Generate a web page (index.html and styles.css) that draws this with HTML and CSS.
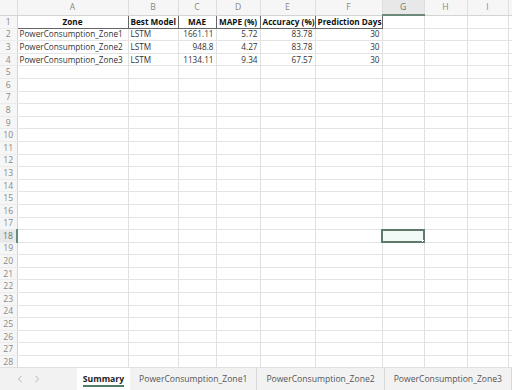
FILE: index.html
```html
<!DOCTYPE html>
<html>
<head>
    <meta charset="UTF-8">
    <title>Summary</title>
    <link rel="stylesheet" href="styles.css">
</head>
<body>
    <div class="sheet">
        <table class="grid">
            <colgroup>
                <col class="c-hdr"><col class="c-a"><col class="c-b"><col class="c-c"><col class="c-d">
                <col class="c-e"><col class="c-f"><col class="c-g"><col class="c-h"><col class="c-i"><col>
            </colgroup>
            <thead>
                <tr>
                    <th class="corner"></th>
                    <th>A</th><th>B</th><th>C</th><th>D</th><th>E</th><th>F</th>
                    <th class="sel-col">G</th><th>H</th><th>I</th><th></th>
                </tr>
            </thead>
            <tbody id="rows">
                <tr>
                    <th>1</th>
                    <td class="head">Zone</td><td class="head">Best Model</td><td class="head">MAE</td>
                    <td class="head">MAPE (%)</td><td class="head">Accuracy (%)</td><td class="head">Prediction Days</td>
                    <td></td><td></td><td></td><td></td>
                </tr>
                <tr>
                    <th>2</th>
                    <td>PowerConsumption_Zone1</td><td>LSTM</td><td class="num">1661.11</td>
                    <td class="num">5.72</td><td class="num">83.78</td><td class="num">30</td>
                    <td></td><td></td><td></td><td></td>
                </tr>
                <tr>
                    <th>3</th>
                    <td>PowerConsumption_Zone2</td><td>LSTM</td><td class="num">948.8</td>
                    <td class="num">4.27</td><td class="num">83.78</td><td class="num">30</td>
                    <td></td><td></td><td></td><td></td>
                </tr>
                <tr>
                    <th>4</th>
                    <td>PowerConsumption_Zone3</td><td>LSTM</td><td class="num">1134.11</td>
                    <td class="num">9.34</td><td class="num">67.57</td><td class="num">30</td>
                    <td></td><td></td><td></td><td></td>
                </tr>
            </tbody>
        </table>
    </div>

    <div class="tabbar">
        <span class="nav first">
            <svg width="6" height="8" viewBox="0 0 6 8"><path d="M4.5 0.8 L1.5 4 L4.5 7.2" fill="none" stroke="#b4b4b4" stroke-width="1"/></svg>
        </span>
        <span class="nav">
            <svg width="6" height="8" viewBox="0 0 6 8"><path d="M1.5 0.8 L4.5 4 L1.5 7.2" fill="none" stroke="#b4b4b4" stroke-width="1"/></svg>
        </span>
        <span class="tab active"><span class="label">Summary</span></span>
        <span class="tab">PowerConsumption_Zone1</span>
        <span class="tab">PowerConsumption_Zone2</span>
        <span class="tab">PowerConsumption_Zone3</span>
    </div>

    <script>
        // fill the empty rows 5..28, G18 is the selected cell
        var body = document.getElementById('rows');
        for (var r = 5; r <= 28; r++) {
            var tr = document.createElement('tr');
            var th = document.createElement('th');
            th.textContent = r;
            if (r === 18) th.className = 'sel-row';
            tr.appendChild(th);
            for (var c = 0; c < 10; c++) {
                var td = document.createElement('td');
                if (r === 18 && c === 6) td.className = 'selected';
                tr.appendChild(td);
            }
            body.appendChild(tr);
        }
    </script>
</body>
</html>
```
FILE: styles.css
```css
body {
    margin: 0;
    width: 512px;
    height: 390px;
    overflow: hidden;
    background: #fff;
    font-family: "Open Sans", "Noto Sans", sans-serif;
    font-size: 8.2px;
    color: #333;
    display: flex;
    flex-direction: column;
}

.sheet {
    height: 367px;
    flex: none;
    overflow: hidden;
}

.grid {
    border-collapse: collapse;
    table-layout: fixed;
    width: 530px;
}

.c-hdr { width: 17px; }
.c-a { width: 111px; }
.c-b { width: 50px; }
.c-c { width: 38px; }
.c-d { width: 44px; }
.c-e { width: 55px; }
.c-f { width: 67px; }
.c-g { width: 42px; }
.c-h { width: 43px; }
.c-i { width: 41px; }

.grid td, .grid th {
    padding: 0 2px;
    white-space: nowrap;
    overflow: hidden;
    line-height: 10px;
}

.grid thead th {
    height: 14px;
    padding: 0;
    background: #f6f6f6;
    color: #888;
    font-weight: normal;
    font-size: 8.6px;
    text-align: center;
    border-right: 1px solid #dedede;
    border-bottom: 1px solid #d4d4d4;
}

.grid thead th.sel-col {
    background: #e8e8e8;
    color: #5b7b6a;
    border-bottom: 2px solid #6b8a79;
}

.grid tbody th {
    height: 11.6px;
    padding: 0;
    background: #f6f6f6;
    color: #888;
    font-weight: normal;
    font-size: 8.6px;
    text-align: center;
    border-right: 1px solid #d4d4d4;
    border-bottom: 1px solid #ececec;
}

.grid tbody th.sel-row {
    background: #e8e8e8;
    color: #5b7b6a;
    border-right: 2px solid #6b8a79;
}

.grid td {
    height: 11.6px;
    border-right: 1px solid #e1e1e1;
    border-bottom: 1px solid #e4e4e4;
    color: #333;
}

.grid td.head {
    font-weight: bold;
    text-align: center;
    color: #111;
    border: 1px solid #666;
}

.grid td.num {
    text-align: right;
}

.grid td.selected {
    background: #f1faf7;
    outline: 2px solid #5d7a6b;
    outline-offset: -1px;
    position: relative;
}

.grid td.selected::after {
    content: "";
    position: absolute;
    right: -3px;
    bottom: -3px;
    width: 3px;
    height: 3px;
    background: #3f6a53;
    border: 1px solid #fff;
}

.tabbar {
    flex: 1;
    display: flex;
    align-items: stretch;
    background: #f2f2f2;
    border-top: 1px solid #e0e0e0;
    color: #555;
    font-size: 8.6px;
}

.nav {
    width: 17px;
    display: flex;
    align-items: center;
    justify-content: center;
}

.nav.first {
    margin-left: 12px;
}

.tab {
    display: flex;
    align-items: center;
    padding: 0 9px;
    border-right: 1px solid #d8d8d8;
}

.tab.active {
    margin-left: 31px;
    background: #fff;
    font-weight: bold;
    color: #222;
    padding: 0 6px;
    border-right: none;
}

.tab.active .label {
    border-bottom: 2px solid #4f7d65;
    line-height: 11px;
    margin-top: 2px;
}
```
